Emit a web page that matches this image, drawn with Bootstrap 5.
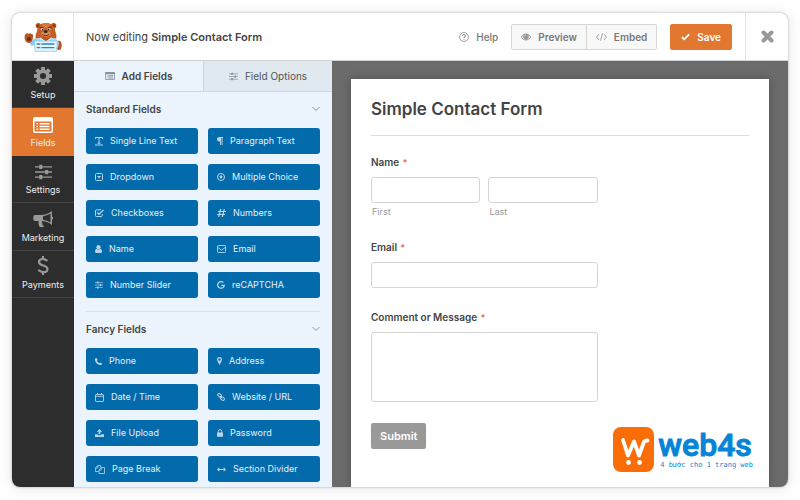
<!DOCTYPE html>
<html lang="en">
<head>
<meta charset="utf-8">
<meta name="viewport" content="width=device-width, initial-scale=1">
<title>Simple Contact Form – Form Builder</title>
<link href="https://cdn.jsdelivr.net/npm/bootstrap@5.3.0/dist/css/bootstrap.min.css" rel="stylesheet">
<style>
  body { font-family: Inter, "Liberation Sans", sans-serif; font-size: 10px; line-height: 16px; color: #444; background: #fff; padding: 13px 12px; }
  svg { display: block; flex: none; }
  .builder { border-radius: 8px; box-shadow: 0 0 2px rgba(0,0,0,.35), 0 1px 14px rgba(0,0,0,.12); background: #fff; }
  .topbar { height: 48px; border-bottom: 1px solid #cfd3d7; }
  .brand { width: 62px; border-right: 1px solid #e4e4e4; }
  .editing { font-size: 11px; padding-left: 12px; }
  .editing strong { font-weight: 600; }
  .help { color: #777; font-weight: 500; gap: 7px; margin-right: 13px; }
  .topbar .btn { font-size: 10px; line-height: 16px; font-weight: 600; padding: 4px 10px; gap: 7px; border-radius: 2px; }
  .topbar .btn-group .btn:first-child { border-top-right-radius: 0; border-bottom-right-radius: 0; }
  .topbar .btn-group .btn:last-child { border-top-left-radius: 0; border-bottom-left-radius: 0; }
  .topbar .btn-tool { color: #777; background: #f8f8f8; border-color: #d6d6d6; padding: 4px 9px; }
  .topbar .btn-save { background: #e27730; border-color: #e27730; color: #fff; margin: 0 13px; }
  .btn-close-builder { width: 43px; border: 0; border-left: 1px solid #e4e4e4; background: none; color: #999; }
  .side { width: 62px; background: #2d2d2d; }
  .side nav { height: 237px; }
  .side a { flex: 1 1 0; color: #eee; font-size: 9px; line-height: 12px; border-bottom: 1px solid #424242; gap: 4px; padding-bottom: 6px; }
  .side a svg { color: #999; }
  .side a.active { background: #e27730; border-color: #e27730; }
  .side a.active svg { color: #fff; }
  .panel { width: 258px; background: #ebf3fc; }
  .panel-tab { height: 31px; border: 0; border-bottom: 1px solid #ced7e0; background: #e0e8f0; color: #555; font-size: 10px; gap: 7px; }
  .panel-tab + .panel-tab { border-left: 1px solid #ced7e0; }
  .panel-tab.active { background: #ebf3fc; color: #444; font-weight: 600; }
  .panel-tab svg { color: #86919e; }
  .group-head { border: 0; background: none; color: #444; font-size: 10px; font-weight: 600; padding: 9px 0 11px; }
  .field-grid { display: grid; grid-template-columns: 1fr 1fr; gap: 10px; }
  .fields-a { padding-bottom: 13px; border-bottom: 1px solid #d9e2ec; }
  .fields-b { padding-bottom: 5px; }
  .field-btn { height: 26px; border: 0; border-radius: 3px; background: #036aab; color: #e6f1f8; font-size: 9px; padding: 0 0 0 9px; gap: 7px; }
  .field-btn svg { color: #b8d6ea; }
  .canvas { background: #6b6b6b; padding: 18px 19px 0; }
  .sheet { background: #fff; padding: 16px 20px 0; box-shadow: 0 0 8px rgba(0,0,0,.25); }
  .sheet h1 { font-size: 17px; line-height: 28px; font-weight: 600; padding-bottom: 12px; border-bottom: 1px solid #ddd; margin-bottom: 18px; }
  .entry { width: 60%; margin-bottom: 21px; }
  .entry label.main-label { font-weight: 600; display: block; margin-bottom: 6px; }
  .req { color: #e0443e; font-weight: 400; font-size: 9px; margin-left: 1px; }
  .entry .form-control { border: 1px solid #d4d4d4; border-radius: 3px; font-size: 11px; padding: 4px 6px; min-height: 26px; height: 26px; }
  .entry textarea.form-control { height: 70px; resize: none; }
  .sub-label { font-size: 9px; line-height: 13px; color: #999; display: block; padding: 2px 0 0 1px; }
  .btn-submit { background: #999; color: #fff; font-weight: 600; font-size: 11px; line-height: 16px; padding: 5px 9px; border: 0; border-radius: 2px; }
  .watermark { right: 16px; bottom: 15px; gap: 4px; color: #0784d6; }
  .wm-name { font: 500 32px/32px Roboto, sans-serif; -webkit-text-stroke: 1px #0784d6; }
  .wm-tag { font: 7px/9px "DejaVu Sans Mono", monospace; padding-left: 2px; }
</style>
<script src="https://cdn.jsdelivr.net/npm/bootstrap@5.3.0/dist/js/bootstrap.bundle.min.js" defer></script>
</head>
<body>
<svg class="d-none" aria-hidden="true">
  <symbol id="sliders" viewBox="0 0 20 18"><path d="M0 3h20M0 9h20M0 15h20" stroke="currentColor" stroke-width="1.6"/><path d="M5 .5h3.500v5H5zM12 6.500h3.500v5H12zM5 12.500h3.500v5H5z" fill="currentColor"/></symbol>
  <symbol id="listcard" viewBox="0 0 20 16"><path fill="currentColor" fill-rule="evenodd" d="M2 0h16a2 2 0 0 1 2 2v12a2 2 0 0 1-2 2H2a2 2 0 0 1-2-2V2a2 2 0 0 1 2-2zM1.500 4.500v9a1 1 0 0 0 1 1h15a1 1 0 0 0 1-1v-9zM3.500 6h1.500v1.500H3.500zM6.500 6h10v1.500h-10zM3.500 8.800h1.500v1.500H3.500zM6.500 8.800h10v1.500h-10zM3.500 11.500h1.500V13H3.500zM6.500 11.500h10V13h-10z"/></symbol>
  <symbol id="chevron" viewBox="0 0 8 6"><path d="M.5 1 4 4.500 7.500 1" fill="none" stroke="currentColor"/></symbol>
</svg>

<div class="builder d-flex flex-column overflow-hidden">
  <header class="topbar d-flex align-items-center">
    <div class="brand align-self-stretch d-flex align-items-center justify-content-center">
      <svg width="38" height="30" viewBox="69 64 114 90" role="img" aria-label="Bear mascot">
        <ellipse cx="174" cy="134" rx="8" ry="14" fill="#b9521c"/>
        <path d="M164 116c8 2 11 10 9 18l-6 14-8-6z" fill="#a9d9f2"/>
        <path d="M104 112c-8 4-13 11-19 15l6 8c8 0 13-3 18-7z" fill="#8ccbed"/>
        <path d="M74 101c2-5 7-4 8-1 3-4 8-3 8 1 4-2 7 1 6 6 0 12-4 20-12 20-9 0-14-9-13-20 0-3 1-5 3-6z" fill="#b9521c"/>
        <ellipse cx="84" cy="115" rx="6" ry="6" fill="#6b2d18"/>
        <circle cx="112" cy="75" r="8" fill="#b9521c"/><circle cx="158" cy="75" r="8" fill="#b9521c"/>
        <circle cx="112" cy="76" r="4" fill="#74331a"/><circle cx="158" cy="76" r="4" fill="#74331a"/>
        <path d="M135 67c19 0 27 12 28 25 1 6 4 9 3 15-2 10-14 16-31 16s-29-6-31-16c-1-6 3-9 4-15 1-13 8-25 27-25z" fill="#c65f24"/>
        <path d="M122 69c7-3 19-3 26 0l-6 13h-13z" fill="#d67a3a"/>
        <path d="M104 106c8 10 54 10 62 0l-1 16h-60z" fill="#b9521c"/>
        <ellipse cx="135" cy="99" rx="14" ry="8" fill="#d98f50"/>
        <ellipse cx="124" cy="86" rx="4" ry="3.500" fill="#fff"/><ellipse cx="144" cy="86" rx="4" ry="3.500" fill="#fff"/>
        <circle cx="125" cy="87" r="2.800" fill="#222"/><circle cx="143" cy="87" r="2.800" fill="#222"/>
        <path d="M115 80l12 1M141 81l12-2" stroke="#5f2814" stroke-width="2.500"/>
        <ellipse cx="134" cy="93" rx="6" ry="4" fill="#32231f"/>
        <path d="M124 101c5 5 15 5 21 0" fill="none" stroke="#5f2814" stroke-width="2.500"/>
        <path d="M103 113l15-2 17 11 16-11 14 2v9h-62z" fill="#a9d9f2"/>
        <path d="M118 112l16 13 17-13" fill="none" stroke="#fff" stroke-width="3"/>
        <path d="M100 121h69l-2 31h-65z" fill="#e5f5fd" stroke="#78bce3" stroke-width="2"/>
        <path d="M107 130h11M121 130h39M107 141h11M121 141h39" stroke="#2588cc" stroke-width="4"/>
      </svg>
    </div>
    <div class="editing me-auto">Now editing <strong>Simple Contact Form</strong></div>
    <a href="#" class="help d-flex align-items-center text-decoration-none">
      <svg width="10" height="10" viewBox="0 0 10 10" fill="none" stroke="#999" stroke-width=".9"><circle cx="5" cy="5" r="4.400"/><path d="M3.500 4c0-1 .7-1.500 1.500-1.500S6.500 3 6.500 3.800C6.500 4.800 5 4.800 5 6M5 6.800v1" stroke-width="1.100"/></svg>
      Help</a>
    <div class="btn-group">
      <button type="button" class="btn btn-tool d-flex align-items-center">
        <svg width="10" height="8" viewBox="0 0 20 14"><path fill="#999" fill-rule="evenodd" d="M10 0c4.500 0 8 3 10 7-2 4-5.500 7-10 7S2 11 0 7c2-4 5.500-7 10-7zM1.800 7C3.500 10 6.500 12.500 10 12.500S16.500 10 18.200 7c-1-2-2.500-3.500-4.200-4.400a5.500 5.500 0 1 1-8 0C4.300 3.500 2.800 5 1.800 7z"/><path d="M7 6a3 3 0 0 1 3-3" stroke="#f8f8f8" fill="none"/></svg>
        Preview</button>
      <button type="button" class="btn btn-tool d-flex align-items-center">
        <svg width="11" height="8" viewBox="0 0 11 8" fill="none" stroke="#999" stroke-width=".9"><path d="M3 1 .6 4 3 7M8 1l2.400 3L8 7M6.500.3l-2 7.400"/></svg>
        Embed</button>
    </div>
    <button type="button" class="btn btn-save d-flex align-items-center">
      <svg width="9" height="8" viewBox="0 0 10 8" fill="none" stroke="#fff" stroke-width="2"><path d="M1 4l2.600 2.600L9 1.200"/></svg>
      Save</button>
    <button type="button" class="btn-close-builder align-self-stretch d-flex align-items-center justify-content-center p-0" aria-label="Close">
      <svg width="13" height="13" viewBox="0 0 13 13" stroke="currentColor" stroke-width="4" stroke-linecap="round"><path d="M2.500 2.500l8 8M10.500 2.500l-8 8"/></svg>
    </button>
  </header>

  <div class="d-flex flex-grow-1">
    <aside class="side flex-shrink-0">
      <nav class="d-flex flex-column" aria-label="Builder sections">
        <a href="#" class="d-flex flex-column align-items-center justify-content-end text-decoration-none">
          <svg width="18" height="18" viewBox="0 0 18 18"><path fill="none" stroke="currentColor" stroke-width="4" d="M9 0v4M9 14v4M0 9h4M14 9h4M2.600 2.600l3 3M12.400 12.400l3 3M15.400 2.600l-3 3M5.600 12.400l-3 3"/><circle cx="9" cy="9" r="4.800" fill="none" stroke="currentColor" stroke-width="3.600"/></svg>
          Setup</a>
        <a href="#" class="active d-flex flex-column align-items-center justify-content-end text-decoration-none" aria-current="page">
          <svg width="20" height="16"><use href="#listcard"/></svg>
          Fields</a>
        <a href="#" class="d-flex flex-column align-items-center justify-content-end text-decoration-none">
          <svg width="17" height="16"><use href="#sliders"/></svg>
          Settings</a>
        <a href="#" class="d-flex flex-column align-items-center justify-content-end text-decoration-none">
          <svg width="20" height="17" viewBox="0 0 20 17"><path fill="currentColor" fill-rule="evenodd" d="M19 0v5.500a1.600 1.600 0 0 1 0 3V14c-3-2.500-6-3.700-9.500-4-1 .8-.8 1.600 0 2.300-.6 1 .2 1.600 1.500 2.700-.8 1.500-3.500 1.500-4.500.8C6 14 5 12.500 5.700 10H2a1.700 1.700 0 0 1-1.700-1.700v-2.600A1.700 1.700 0 0 1 2 4h6c4 0 7.500-1.500 11-4zm-1.500 2.600C15 4 12.500 5 10 5.300v3.400c2.500.4 5 1.300 7.500 2.700z"/></svg>
          Marketing</a>
        <a href="#" class="d-flex flex-column align-items-center justify-content-end text-decoration-none">
          <svg width="12" height="19" viewBox="0 0 12 19" fill="none" stroke="currentColor" stroke-width="2.200"><path d="M6 0v3M6 16v3M10.400 4.800C8.500 3.300 6.900 3 5.800 3 3.500 3 2 4.200 2 6c0 4.500 8.500 2.500 8.500 7 0 2-1.700 3.100-4.200 3.100-1.800 0-3.500-.7-5-2.100"/></svg>
          Payments</a>
      </nav>
    </aside>

    <section class="panel flex-shrink-0">
      <div class="d-flex">
        <button type="button" class="panel-tab active flex-fill w-50 d-flex align-items-center justify-content-center">
          <svg width="10" height="8"><use href="#listcard"/></svg>Add Fields</button>
        <button type="button" class="panel-tab flex-fill w-50 d-flex align-items-center justify-content-center">
          <svg width="9" height="9"><use href="#sliders"/></svg>Field Options</button>
      </div>
      <div class="px-2 mx-1">
        <button type="button" class="group-head w-100 d-flex align-items-center justify-content-between">Standard Fields <svg width="8" height="6" color="#86919e"><use href="#chevron"/></svg></button>
        <div class="field-grid fields-a">
          <button type="button" class="field-btn d-flex align-items-center"><svg width="8" height="9" viewBox="0 0 8 9" fill="none" stroke="currentColor"><path d="M.5 2V.5h7V2M4 .5v6M2.500 6.200h3M0 8h8"/></svg>Single Line Text</button>
          <button type="button" class="field-btn d-flex align-items-center"><svg width="6" height="8" viewBox="0 0 6 8"><path fill="currentColor" d="M2.500 0H6v1H5.500v7h-.9V1H4v7h-.9V4.500C1.200 4.500 0 3.700 0 2.200S1 0 2.500 0z"/></svg>Paragraph Text</button>
          <button type="button" class="field-btn d-flex align-items-center"><svg width="8" height="8" viewBox="0 0 8 8"><rect x=".5" y=".5" width="7" height="7" rx="1" fill="none" stroke="currentColor"/><path fill="currentColor" d="M2 3h4L4 5.500z"/></svg>Dropdown</button>
          <button type="button" class="field-btn d-flex align-items-center"><svg width="8" height="8" viewBox="0 0 8 8"><circle cx="4" cy="4" r="3.500" fill="none" stroke="currentColor"/><circle cx="4" cy="4" r="1.400" fill="currentColor"/></svg>Multiple Choice</button>
          <button type="button" class="field-btn d-flex align-items-center"><svg width="9" height="8" viewBox="0 0 9 8" fill="none" stroke="currentColor"><path d="M6 .8H1.500a1 1 0 0 0-1 1v4.700a1 1 0 0 0 1 1h4.700a1 1 0 0 0 1-1V5"/><path d="M2.200 3.500l1.800 1.800L8.500.9" stroke-width="1.300"/></svg>Checkboxes</button>
          <button type="button" class="field-btn d-flex align-items-center"><svg width="9" height="8" viewBox="0 0 9 8" fill="none" stroke="currentColor" stroke-width="1.200"><path d="M3.700 0l-2 8M7.300 0l-2 8M1 2.500h8M0 5.500h8"/></svg>Numbers</button>
          <button type="button" class="field-btn d-flex align-items-center"><svg width="7" height="8" viewBox="0 0 7 8" fill="currentColor"><circle cx="3.500" cy="2.200" r="2.100"/><path d="M1.500 3.800c1 1 3 1 4 0C6.700 4.200 7 5.500 7 6.800 7 7.500 6.500 8 5.900 8H1.100C.5 8 0 7.500 0 6.800 0 5.500.3 4.200 1.500 3.800z"/></svg>Name</button>
          <button type="button" class="field-btn d-flex align-items-center"><svg width="9" height="8" viewBox="0 0 9 8" fill="none" stroke="currentColor" stroke-width=".9"><rect x=".5" y=".5" width="8" height="7" rx=".8"/><path d="M.5 2.200l4 3 4-3"/></svg>Email</button>
          <button type="button" class="field-btn d-flex align-items-center"><svg width="8" height="8"><use href="#sliders"/></svg>Number Slider</button>
          <button type="button" class="field-btn d-flex align-items-center"><svg width="8" height="8" viewBox="0 0 8 8" fill="none" stroke="currentColor" stroke-width="1.300"><path d="M6.400 1.600A3.300 3.300 0 1 0 7.300 4.300H4.200"/></svg>reCAPTCHA</button>
        </div>
        <button type="button" class="group-head w-100 d-flex align-items-center justify-content-between">Fancy Fields <svg width="8" height="6" color="#86919e"><use href="#chevron"/></svg></button>
        <div class="field-grid fields-b">
          <button type="button" class="field-btn d-flex align-items-center"><svg width="7" height="7" viewBox="0 0 7 7"><path fill="currentColor" d="M1.600 0 2.600 2 1.800 2.800C2.300 3.800 3.200 4.700 4.200 5.200L5 4.400 7 5.400C7 6.400 6.300 7 5.400 7 2.600 7 0 4.400 0 1.600 0 .7.600 0 1.600 0z"/></svg>Phone</button>
          <button type="button" class="field-btn d-flex align-items-center"><svg width="5" height="8" viewBox="0 0 5 8"><path fill="currentColor" fill-rule="evenodd" d="M2.500 0A2.500 2.500 0 0 1 5 2.500C5 3.500 3.500 6 2.500 8 1.500 6 0 3.500 0 2.500A2.500 2.500 0 0 1 2.500 0zm0 1.300a1.200 1.200 0 1 0 0 2.400 1.200 1.200 0 0 0 0-2.400z"/></svg>Address</button>
          <button type="button" class="field-btn d-flex align-items-center"><svg width="9" height="9" viewBox="0 0 9 9" fill="none" stroke="currentColor" stroke-width=".9"><rect x=".5" y="1.500" width="8" height="7" rx=".6"/><path d="M.5 3.300h8M2.500 0v2M6.500 0v2"/></svg>Date / Time</button>
          <button type="button" class="field-btn d-flex align-items-center"><svg width="8" height="8" viewBox="0 0 8 8" fill="none" stroke="currentColor" stroke-width="1"><rect x=".6" y="1" width="4" height="2.600" rx="1.200" transform="rotate(42 2.600 2.300)"/><rect x="3.500" y="4.300" width="4" height="2.600" rx="1.200" transform="rotate(42 5.500 5.600)"/><path d="M3 3l2.200 2.200"/></svg>Website / URL</button>
          <button type="button" class="field-btn d-flex align-items-center"><svg width="9" height="8" viewBox="0 0 9 8" fill="currentColor"><path d="M4.500 0l2.700 2.800H5.400v2.500H3.600V2.800H1.800zM0 5.300h2.800v.9h3.400v-.9H9V8H0z"/></svg>File Upload</button>
          <button type="button" class="field-btn d-flex align-items-center"><svg width="6" height="8" viewBox="0 0 6 8"><rect y="3.500" width="6" height="4.300" rx=".6" fill="currentColor"/><path d="M1.300 4V2.300a1.700 1.700 0 0 1 3.400 0V4" fill="none" stroke="currentColor"/></svg>Password</button>
          <button type="button" class="field-btn d-flex align-items-center"><svg width="10" height="9" viewBox="0 0 10 9" fill="none" stroke="currentColor" stroke-width=".8"><path d="M3.800 6.500H.5V3L2.700.5h3v2M2.800.6V3H.6M4 5l2.200-2.500h3.300v6H4zM6.200 2.600V5H4.100"/></svg>Page Break</button>
          <button type="button" class="field-btn d-flex align-items-center"><svg width="9" height="5" viewBox="0 0 9 5"><path d="M1 2.500h7" stroke="currentColor"/><path fill="currentColor" d="M0 2.500 2.300.3v4.400zM9 2.500 6.700.3v4.400z"/></svg>Section Divider</button>
        </div>
      </div>
    </section>

    <main class="canvas flex-grow-1 d-flex">
      <form class="sheet flex-grow-1 position-relative">
        <h1>Simple Contact Form</h1>
        <div class="entry">
          <label class="main-label" for="first">Name <span class="req">*</span></label>
          <div class="row gx-2">
            <div class="col"><input id="first" type="text" class="form-control"><label class="sub-label" for="first">First</label></div>
            <div class="col"><input id="last" type="text" class="form-control"><label class="sub-label" for="last">Last</label></div>
          </div>
        </div>
        <div class="entry">
          <label class="main-label" for="email">Email <span class="req">*</span></label>
          <input id="email" type="email" class="form-control">
        </div>
        <div class="entry">
          <label class="main-label" for="msg">Comment or Message <span class="req">*</span></label>
          <textarea id="msg" class="form-control"></textarea>
        </div>
        <button type="button" class="btn btn-submit">Submit</button>
        <div class="watermark position-absolute d-flex align-items-center">
          <svg width="41" height="45" viewBox="0 0 41 45"><rect width="41" height="45" rx="8" fill="#fb6d06"/><path d="M10 13l5 15.500 6-14 5 14 4.500-12.500c.8-2.200 1.800-2.500 4-2.500" fill="none" stroke="#fff" stroke-width="3.800" stroke-linecap="round" stroke-linejoin="round"/><circle cx="15.500" cy="35.500" r="2.400" fill="#fff"/><circle cx="26.500" cy="35.500" r="2.400" fill="#fff"/></svg>
          <div><div class="wm-name">web4s</div><div class="wm-tag">4 bước cho 1 trang web</div></div>
        </div>
      </form>
    </main>
  </div>
</div>
</body>
</html>
